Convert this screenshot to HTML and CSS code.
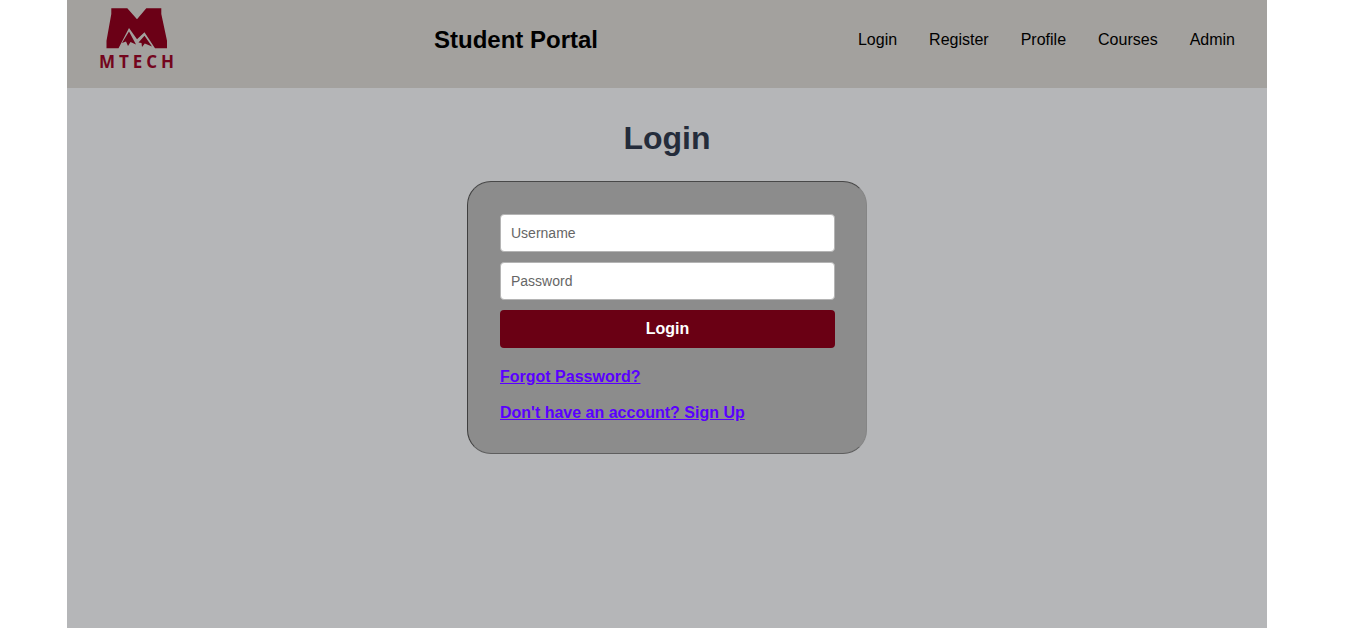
FILE: index.html
```html
<!DOCTYPE html>
<html lang="en">
<head>
<meta charset="utf-8">
<title>Student Portal - Login</title>
<link rel="stylesheet" href="styles.css">
</head>
<body>
<div class="app">
  <header class="site-header">
    <a class="logo" href="#">
      <svg class="logo-mark" viewBox="0 0 62 41" aria-hidden="true">
        <path class="logo-fill" d="M5.3 0.3H21.3L31 11.3L40.3 0.3H55.3V6L61 32.7V40.3H49L38.5 24.3L31 31.3L23 20L12.5 40.3H0.5V32.7L5.3 6Z"/>
        <path class="logo-fill" d="M23 23.5L16 35L20 33.5L22 38L24.5 34L30 36.5Z"/>
        <path class="logo-fill" d="M38.5 27.8L32.5 34.5L35.5 35L36 39L38.8 35.5L46 38.5Z"/>
      </svg>
      <span class="logo-text">MTECH</span>
    </a>
    <h2 class="site-title">Student Portal</h2>
    <nav class="site-nav">
      <a href="#">Login</a>
      <a href="#">Register</a>
      <a href="#">Profile</a>
      <a href="#">Courses</a>
      <a href="#">Admin</a>
    </nav>
  </header>
  <main class="content">
    <h1 class="page-title">Login</h1>
    <form class="card">
      <input class="field" type="text" placeholder="Username">
      <input class="field" type="password" placeholder="Password">
      <button class="submit" type="button">Login</button>
      <a class="card-link first" href="#">Forgot Password?</a>
      <a class="card-link" href="#">Don't have an account? Sign Up</a>
    </form>
  </main>
</div>
</body>
</html>
```

FILE: styles.css
```css
* {
  box-sizing: border-box;
}

html,
body {
  height: 100%;
}

body {
  margin: 0;
  background: #ffffff;
  font-family: "Liberation Sans", Arial, sans-serif;
  overflow: hidden;
}

.app {
  width: 1200px;
  height: 100%;
  margin-left: 67px;
  display: flex;
  flex-direction: column;
  background: #b5b6b8;
}

.site-header {
  height: 88px;
  flex: none;
  padding: 8px 32px 16px;
  display: flex;
  align-items: center;
  justify-content: space-between;
  background: #a3a19e;
}

.logo {
  width: 75px;
  height: 60px;
  display: flex;
  flex-direction: column;
  align-items: center;
  text-decoration: none;
  align-self: flex-start;
}

.logo-mark {
  width: 62px;
  height: 41px;
  display: block;
  flex: none;
}

.logo-fill {
  fill: #6b0016;
}

.logo-text {
  margin-top: 4px;
  font-family: "Open Sans", "Liberation Sans", sans-serif;
  font-size: 17px;
  line-height: 17px;
  font-weight: 700;
  letter-spacing: 4px;
  margin-right: -4px;
  color: #74051d;
}

.site-title {
  margin: 0;
  font-size: 24px;
  line-height: 28px;
  font-weight: 700;
  color: #000000;
}

.site-nav {
  display: flex;
  gap: 32px;
}

.site-nav a {
  font-size: 16px;
  line-height: 18px;
  color: #000000;
  text-decoration: none;
}

.content {
  flex: 1;
  display: flex;
  flex-direction: column;
  align-items: center;
}

.page-title {
  margin: 32px 0 25px;
  font-size: 32px;
  line-height: 36px;
  font-weight: 700;
  color: #242c3b;
}

.card {
  width: 400px;
  padding: 32px 31px 31px 32px;
  display: flex;
  flex-direction: column;
  align-items: flex-start;
  background: #8c8c8c;
  border: 1px solid;
  border-color: #484848 #858585 #5e5e5e #3f3f3f;
  border-radius: 24px;
}

.field {
  width: 100%;
  height: 38px;
  margin-bottom: 10px;
  padding: 0 10px;
  font-family: inherit;
  font-size: 14px;
  color: #222222;
  background: #ffffff;
  border: 1px solid #b4b4b4;
  border-radius: 4px;
}

.field::placeholder {
  color: #666666;
  opacity: 1;
}

.submit {
  width: 100%;
  height: 38px;
  padding: 0;
  font-family: inherit;
  font-size: 16px;
  font-weight: 700;
  color: #ffffff;
  background: #6a0014;
  border: 0;
  border-radius: 4px;
}

.card-link {
  margin-top: 18px;
  font-size: 16px;
  line-height: 18px;
  font-weight: 700;
  color: #5a00ff;
}

.card-link.first {
  margin-top: 20px;
}
```
